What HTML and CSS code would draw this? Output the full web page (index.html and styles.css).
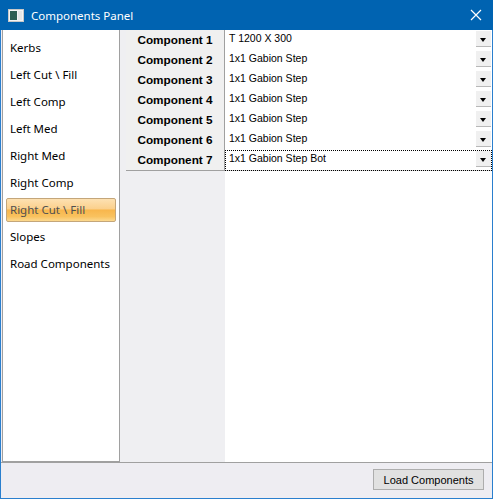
FILE: index.html
```html
<!DOCTYPE html>
<html lang="en">
<head>
    <meta charset="UTF-8">
    <title>Components Panel</title>
    <link rel="stylesheet" href="styles.css">
</head>
<body>
    <div class="window">
        <div class="titlebar">
            <svg class="app-icon" width="16" height="13" viewBox="0 0 16 13">
                <rect x="0.5" y="0.5" width="15" height="12" fill="#f4f4f4" stroke="#c8c8c8"/>
                <rect x="2" y="2" width="7" height="9" fill="#2e5e52"/>
                <rect x="10" y="2" width="4" height="9" fill="#e6e6e6"/>
            </svg>
            <span class="title">Components Panel</span>
            <svg class="close" width="12" height="12" viewBox="0 0 12 12">
                <path d="M1 1 L11 11 M11 1 L1 11" stroke="#fff" stroke-width="1.2"/>
            </svg>
        </div>

        <div class="main">
            <ul class="list">
                <li>Kerbs</li>
                <li>Left Cut \ Fill</li>
                <li>Left Comp</li>
                <li>Left Med</li>
                <li>Right Med</li>
                <li>Right Comp</li>
                <li class="selected">Right Cut \ Fill</li>
                <li>Slopes</li>
                <li>Road Components</li>
            </ul>

            <div class="grid">
                <div class="row">
                    <div class="name">Component 1</div>
                    <div class="value">T 1200 X 300<span class="drop"></span></div>
                </div>
                <div class="row">
                    <div class="name">Component 2</div>
                    <div class="value">1x1 Gabion Step<span class="drop"></span></div>
                </div>
                <div class="row">
                    <div class="name">Component 3</div>
                    <div class="value">1x1 Gabion Step<span class="drop"></span></div>
                </div>
                <div class="row">
                    <div class="name">Component 4</div>
                    <div class="value">1x1 Gabion Step<span class="drop"></span></div>
                </div>
                <div class="row">
                    <div class="name">Component 5</div>
                    <div class="value">1x1 Gabion Step<span class="drop"></span></div>
                </div>
                <div class="row">
                    <div class="name">Component 6</div>
                    <div class="value">1x1 Gabion Step<span class="drop"></span></div>
                </div>
                <div class="row">
                    <div class="name">Component 7</div>
                    <div class="value focused">1x1 Gabion Step Bot<span class="drop"></span></div>
                </div>
            </div>
        </div>

        <div class="footer">
            <button class="load-btn">Load Components</button>
        </div>
    </div>
</body>
</html>
```

FILE: styles.css
```css
body {
    margin: 0;
    font-family: "Noto Sans", sans-serif;
}
.window {
    width: 493px;
    height: 499px;
    box-sizing: border-box;
    border: 1px solid #2a7fce;
    border-top: none;
    display: flex;
    flex-direction: column;
    background: #eeedf2;
}
.titlebar {
    height: 30px;
    margin: 0 -1px;
    background: #0063b1;
    display: flex;
    align-items: center;
    color: #fff;
    flex-shrink: 0;
}
.app-icon {
    margin-left: 8px;
    margin-right: 7px;
}
.title {
    font-size: 11.5px;
    flex: 1;
}
.close {
    margin-right: 11px;
}
.main {
    height: 432px;
    display: flex;
    flex-shrink: 0;
}
.list {
    list-style: none;
    margin: 0 0 0 1px;
    padding: 6px 0 0 3px;
    width: 118px;
    box-sizing: border-box;
    border: 1px solid #a0a0a0;
    border-top: none;
    background: #fff;
    display: flex;
    flex-direction: column;
    gap: 3px;
}
.list li {
    height: 24px;
    width: 110px;
    box-sizing: border-box;
    padding-left: 4px;
    line-height: 24px;
    font-size: 11.5px;
    color: #000;
}
.list li.selected {
    border: 1px solid #c4a67a;
    border-radius: 2px;
    padding-left: 3px;
    line-height: 22px;
    color: #505050;
    background: linear-gradient(#fde1b2 0%, #fbd08c 45%, #f8b64c 50%, #f9c25f 80%, #fcd98f 100%);
}
.grid {
    flex: 1;
    background: linear-gradient(to right, #efeff2 105px, #fff 105px);
}
.row {
    display: grid;
    grid-template-columns: 99px 1fr;
    padding-left: 6px;
    height: 20px;
}
.name {
    background: #f0f0f0;
    border-right: 1px solid #a0a0a0;
    border-bottom: 1px solid #a0a0a0;
    font-family: "Liberation Sans", Arial, sans-serif;
    font-weight: bold;
    font-size: 11.75px;
    line-height: 20px;
    text-align: center;
}
.value {
    position: relative;
    background: #fff;
    border-bottom: 1px solid #d4d4d4;
    font-family: "Liberation Sans", Arial, sans-serif;
    font-size: 10.5px;
    line-height: 16px;
    padding-left: 4px;
}
.value.focused {
    outline: 1px dotted #000;
    outline-offset: -1px;
}
.drop {
    position: absolute;
    right: 1px;
    top: 1px;
    width: 15px;
    height: 16px;
    box-sizing: border-box;
    background: #f0f0f0;
    border-bottom: 1px solid #b8b8b8;
}
.drop::after {
    content: "";
    position: absolute;
    left: 4px;
    top: 7px;
    border-left: 3.5px solid transparent;
    border-right: 3.5px solid transparent;
    border-top: 4px solid #000;
}
.footer {
    flex: 1;
    border-top: 1px solid #a0a0a0;
    display: flex;
    justify-content: flex-end;
    align-items: flex-start;
    padding: 6px 8px 0 0;
}
.load-btn {
    width: 111px;
    height: 21px;
    background: #e1e1e1;
    border: 1px solid #adadad;
    font-family: "Liberation Sans", Arial, sans-serif;
    font-size: 11px;
    color: #000;
    padding: 0;
}
```
